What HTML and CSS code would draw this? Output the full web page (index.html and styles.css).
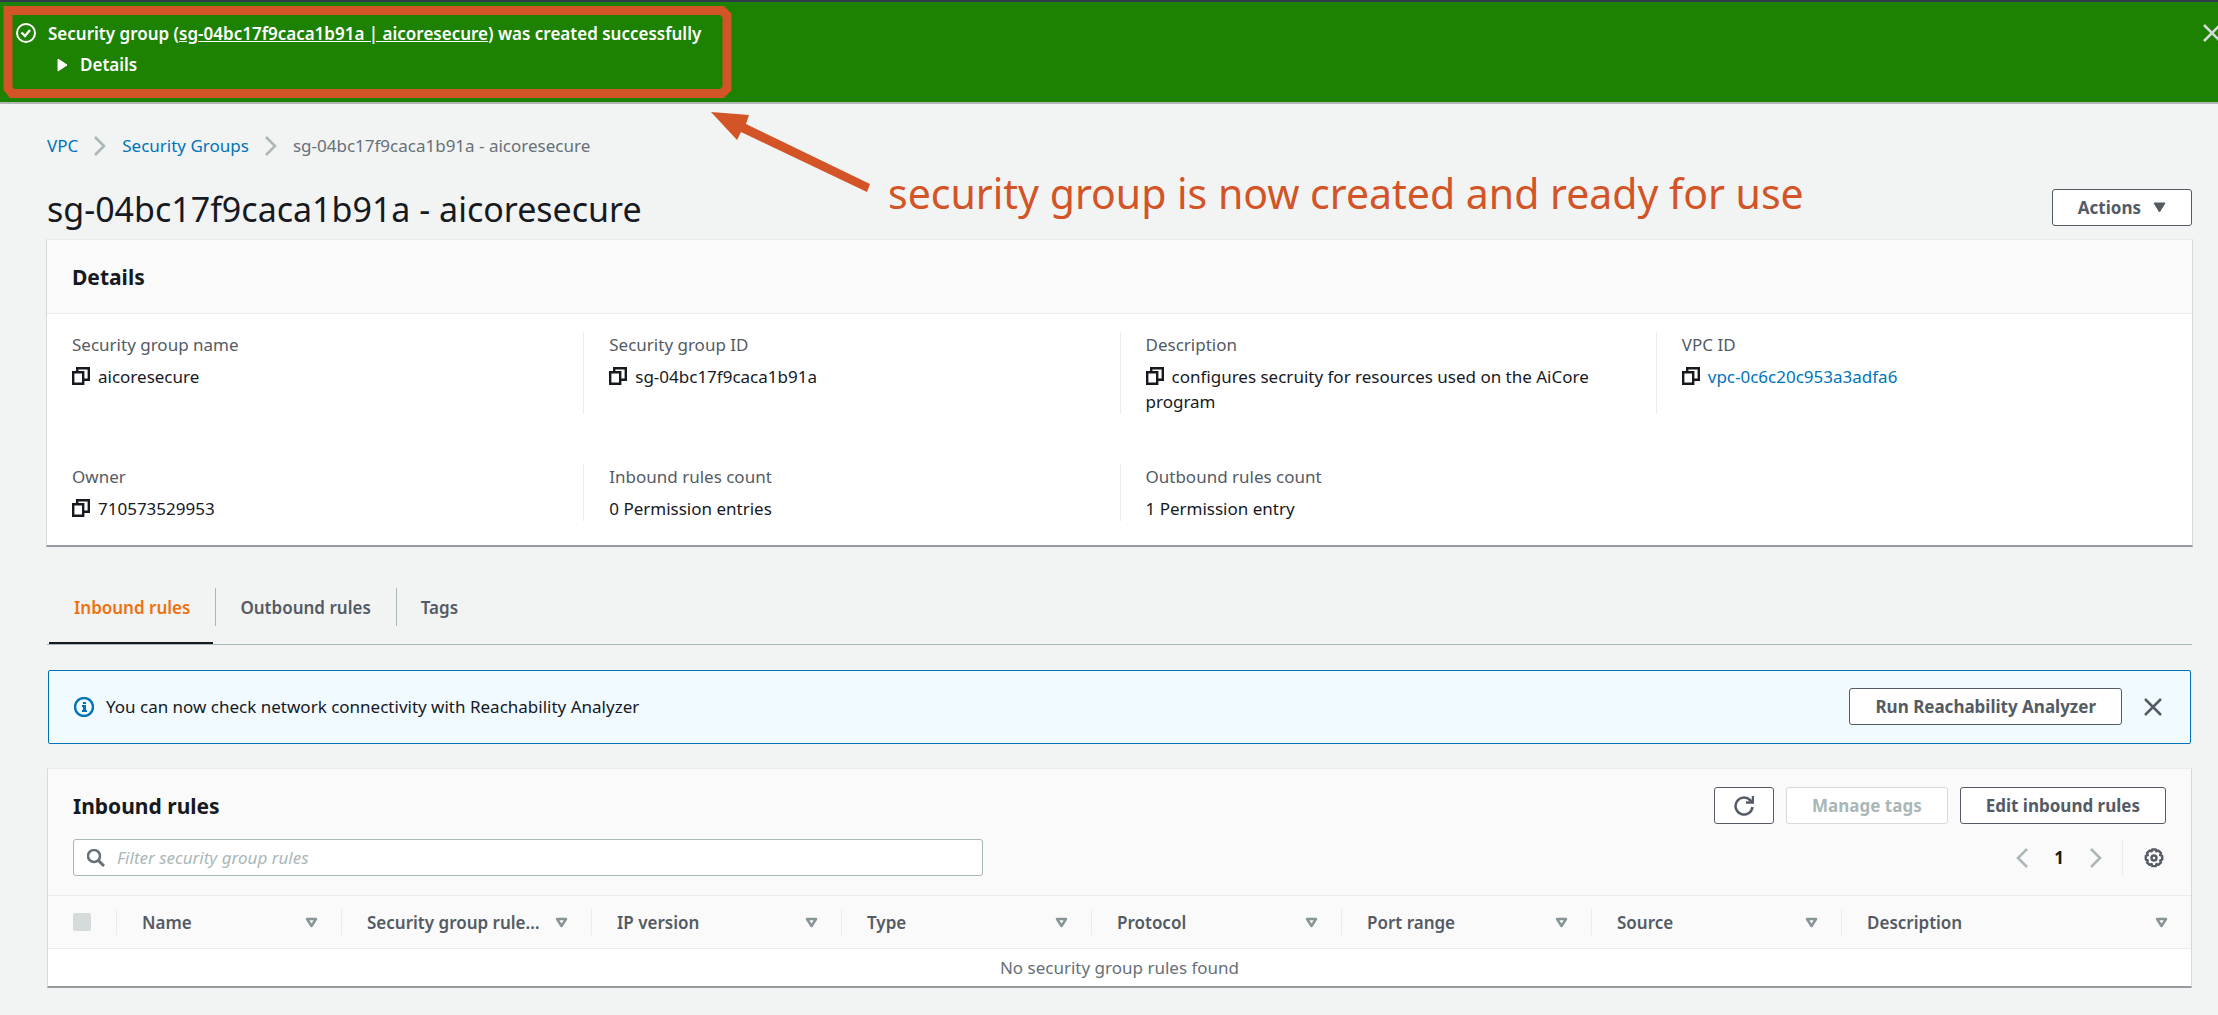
FILE: index.html
```html
<!DOCTYPE html>
<html lang="en">
<head>
<meta charset="utf-8">
<title>Security group details</title>
<link rel="stylesheet" href="styles.css">
</head>
<body>
<svg class="sprite" aria-hidden="true">
  <symbol id="copy" viewBox="0 0 18 18"><path d="M1.200 5.200h10v11.600h-10zM5.200 5V1.200h11.600v11.600H11" fill="none" stroke="currentColor" stroke-width="2.400"/></symbol>
  <symbol id="close" viewBox="0 0 18 18"><path d="M1 1l16 16M17 1L1 17" fill="none" stroke="currentColor" stroke-width="2.500"/></symbol>
  <symbol id="next" viewBox="0 0 12 20"><path d="M1 1l9 9-9 9" fill="none" stroke="currentColor" stroke-width="2.500"/></symbol>
  <symbol id="prev" viewBox="0 0 12 20"><path d="M11 1l-9 9 9 9" fill="none" stroke="currentColor" stroke-width="2.500"/></symbol>
  <symbol id="sort" viewBox="0 0 13 11"><path d="M2 2h9L6.500 9z" fill="none" stroke="currentColor" stroke-width="2.500" stroke-linejoin="round"/></symbol>
</svg>

<div class="flash" role="status">
  <svg class="icon20" viewBox="0 0 20 20"><circle cx="10" cy="10" r="9" fill="none" stroke="currentColor" stroke-width="2"/><path d="M5.500 9.500l3.500 3.500 5-6" fill="none" stroke="currentColor" stroke-width="2.400"/></svg>
  <div class="flash-body">
    <p>Security group (<a href="#group">sg-04bc17f9caca1b91a | aicoresecure</a>) was created successfully</p>
    <details>
      <summary><svg class="caret" viewBox="0 0 11 14"><path d="M1 1v12l9-6z" fill="currentColor" stroke="currentColor" stroke-linejoin="round"/></svg>Details</summary>
    </details>
  </div>
  <button class="plain flash-close" aria-label="Dismiss"><svg class="icon18"><use href="#close"/></svg></button>
</div>

<main id="group">
  <nav class="crumbs" aria-label="Breadcrumbs">
    <a href="#vpc">VPC</a>
    <svg class="chevron"><use href="#next"/></svg>
    <a href="#groups">Security Groups</a>
    <svg class="chevron"><use href="#next"/></svg>
    <span>sg-04bc17f9caca1b91a - aicoresecure</span>
  </nav>

  <header class="title-row">
    <h1>sg-04bc17f9caca1b91a - aicoresecure</h1>
    <button class="btn">Actions <svg class="down" viewBox="0 0 13 11"><path d="M1 1h11L6.500 10z" fill="currentColor" stroke="currentColor" stroke-linejoin="round"/></svg></button>
  </header>

  <section class="card summary">
    <h2 class="card-head">Details</h2>
    <dl class="facts">
      <div><dt>Security group name</dt><dd><svg class="icon18"><use href="#copy"/></svg>aicoresecure</dd></div>
      <div><dt>Security group ID</dt><dd><svg class="icon18"><use href="#copy"/></svg>sg-04bc17f9caca1b91a</dd></div>
      <div><dt>Description</dt><dd><svg class="icon18"><use href="#copy"/></svg>configures secruity for resources used on the AiCore program</dd></div>
      <div><dt>VPC ID</dt><dd><svg class="icon18"><use href="#copy"/></svg><a href="#vpc">vpc-0c6c20c953a3adfa6</a></dd></div>
      <div><dt>Owner</dt><dd><svg class="icon18"><use href="#copy"/></svg>710573529953</dd></div>
      <div><dt>Inbound rules count</dt><dd>0 Permission entries</dd></div>
      <div><dt>Outbound rules count</dt><dd>1 Permission entry</dd></div>
    </dl>
  </section>

  <div class="tabs" role="tablist">
    <button class="tab active" role="tab" aria-selected="true">Inbound rules</button>
    <button class="tab" role="tab">Outbound rules</button>
    <button class="tab" role="tab">Tags</button>
  </div>

  <div class="notice">
    <svg class="icon20" viewBox="0 0 20 20"><circle cx="10" cy="10" r="9" fill="none" stroke="currentColor" stroke-width="2.400"/><path d="M9 5h3v2H9zM8 8h4v5h1v2H8v-2h1v-3H8z" fill="currentColor"/></svg>
    <p>You can now check network connectivity with Reachability Analyzer</p>
    <button class="btn">Run Reachability Analyzer</button>
    <button class="plain" aria-label="Dismiss"><svg class="icon18"><use href="#close"/></svg></button>
  </div>

  <section class="card rules">
    <div class="rules-head">
      <h2>Inbound rules</h2>
      <div class="actions">
        <button class="btn refresh" aria-label="Refresh"><svg class="icon20" viewBox="0 0 20 20"><path d="M18.500 11A8.500 8.500 0 1 1 16 4l2 2" fill="none" stroke="currentColor" stroke-width="2.500"/><path d="M19 0v6.500h-7" fill="none" stroke="currentColor" stroke-width="2.500"/></svg></button>
        <button class="btn" disabled>Manage tags</button>
        <button class="btn">Edit inbound rules</button>
      </div>
    </div>
    <div class="filter-row">
      <label class="search">
        <svg class="icon18" viewBox="0 0 18 18"><circle cx="7" cy="7" r="6" fill="none" stroke="currentColor" stroke-width="2.500"/><path d="M11 11l6 6" stroke="currentColor" stroke-width="3"/></svg>
        <input type="text" placeholder="Filter security group rules" aria-label="Filter security group rules">
      </label>
      <div class="pager">
        <button class="plain" aria-label="Previous page"><svg class="chevron"><use href="#prev"/></svg></button>
        <button class="plain page">1</button>
        <button class="plain" aria-label="Next page"><svg class="chevron"><use href="#next"/></svg></button>
        <button class="plain gear" aria-label="Preferences"><svg class="icon20" viewBox="0 0 20 20"><path d="M8.200 1.500h3.600l.6 1.800 2-.8 2.600 2.600-.8 2 2 .7v3.800l-2 .7.8 2-2.600 2.600-2-.8-.6 2H8.200l-.6-2-2 .8L3 14.300l.8-2-2-.7V7.800l2-.7-.8-2 2.600-2.600 2 .8z" fill="none" stroke="currentColor" stroke-width="2.400" stroke-linejoin="round"/><circle cx="10" cy="10" r="2.500" fill="none" stroke="currentColor" stroke-width="2.400"/></svg></button>
      </div>
    </div>
    <table>
      <colgroup><col class="c-check"><col class="c-name"><col class="c"><col class="c"><col class="c"><col class="c"><col class="c"><col class="c"><col></colgroup>
      <thead>
        <tr>
          <th><div><input type="checkbox" disabled aria-label="Select all rules"></div></th>
          <th><div><span>Name</span><svg class="sort"><use href="#sort"/></svg></div></th>
          <th><div><span>Security group rule…</span><svg class="sort"><use href="#sort"/></svg></div></th>
          <th><div><span>IP version</span><svg class="sort"><use href="#sort"/></svg></div></th>
          <th><div><span>Type</span><svg class="sort"><use href="#sort"/></svg></div></th>
          <th><div><span>Protocol</span><svg class="sort"><use href="#sort"/></svg></div></th>
          <th><div><span>Port range</span><svg class="sort"><use href="#sort"/></svg></div></th>
          <th><div><span>Source</span><svg class="sort"><use href="#sort"/></svg></div></th>
          <th><div><span>Description</span><svg class="sort"><use href="#sort"/></svg></div></th>
        </tr>
      </thead>
      <tbody><tr><td colspan="9">No security group rules found</td></tr></tbody>
    </table>
  </section>
</main>

<svg class="markup" width="880" height="200" viewBox="0 0 880 200" aria-hidden="true">
  <path d="M8 10.500h714l5 5v73l-5 5H12l-4-5z" fill="none" stroke="#d35426" stroke-width="9"/>
  <path d="M711 112l38 3-3 9 124 60-3 8-126-60-4 8z" fill="#d35426"/>
</svg>
<p class="markup-text">security group is now created and ready for use</p>
</body>
</html>
```
FILE: styles.css
```css
:root {
  --ink: #16191f;
  --muted: #545b64;
  --link: #0073bb;
  --line: #eaeded;
  --grey: #aab7b8;
  --mark: #d35426;
}
* { box-sizing: border-box; }
body {
  margin: 0;
  position: relative;
  overflow-x: hidden;
  background: #f2f3f3;
  color: var(--ink);
  font: 17px/25px "Noto Sans", sans-serif;
}
p, h1, h2, dl, dd { margin: 0; }
a { color: var(--link); text-decoration: none; }
button, input { font: inherit; color: inherit; }
svg { flex: none; display: block; }
.sprite { position: absolute; width: 0; height: 0; }
.icon18 { width: 18px; height: 18px; }
.icon20 { width: 20px; height: 20px; }
.chevron { width: 12px; height: 20px; color: var(--grey); }

.plain { padding: 0; border: 0; background: none; color: var(--muted); }
.btn {
  display: flex;
  align-items: center;
  gap: 12px;
  height: 37px;
  padding: 0 25px;
  border: 1px solid var(--muted);
  border-radius: 3px;
  background: #fff;
  color: var(--muted);
  font-weight: 700;
  white-space: nowrap;
}
.btn:disabled { border-color: #d5dbdb; color: var(--grey); }
.down { width: 13px; height: 11px; }

.flash {
  display: flex;
  gap: 12px;
  height: 104px;
  padding: 19px 0 0 16px;
  border-top: 2px solid #2f3b4a;
  border-bottom: 2px solid #b1b6b8;
  background: #1d8102;
  color: #fff;
  font-weight: 600;
}
.flash > .icon20 { margin-top: 2px; }
.flash-body { flex: 1; }
.flash a { color: #fff; text-decoration: underline; }
.flash details { margin-top: 6px; padding-left: 9px; }
.flash summary { display: flex; align-items: center; gap: 12px; list-style: none; }
.caret { width: 11px; height: 14px; }
.flash-close { height: 18px; margin: 3px -3px 0 0; color: #d5dbdb; }

main { padding: 29px 26px 28px 47px; }
.crumbs { display: flex; align-items: center; gap: 16px; color: #687078; }
.title-row {
  display: flex;
  align-items: flex-start;
  justify-content: space-between;
  height: 41px;
  margin: 28px 0 12px;
}
h1 { font-size: 34px; line-height: 46px; font-weight: 400; }
.title-row .btn { margin-top: 3px; }

.card {
  border: 1px solid #d5dbdb;
  border-top-color: var(--line);
  border-bottom: 2px solid #959ca0;
  background: #fff;
}
.summary { margin: 0 -1px; }
h2 { font-size: 21px; line-height: 28px; font-weight: 700; }
.card-head { padding: 23px 25px 22px; background: #fafafa; border-bottom: 1px solid var(--line); }
.facts {
  display: grid;
  grid-template-columns: repeat(4, 1fr);
  row-gap: 50px;
  padding: 18px 0 24px;
}
.facts > div { padding: 0 60px 0 25px; border-left: 1px solid var(--line); }
.facts > div:nth-child(4n + 1) { border-left-color: transparent; padding-left: 24px; }
.facts dt { color: var(--muted); margin-bottom: 7px; }
.facts svg { display: inline-block; margin-right: 8px; vertical-align: -2px; }

.tabs { display: flex; margin-top: 41px; border-bottom: 1px solid var(--grey); padding-left: 2px; }
.tab {
  position: relative;
  height: 56px;
  padding: 0 25px 18px;
  border: 0;
  background: none;
  color: var(--muted);
  font-weight: 600;
}
.tab + .tab::before {
  content: "";
  position: absolute;
  left: 0;
  top: 0;
  height: 38px;
  border-left: 1px solid var(--grey);
}
.tab.active { color: #ec7211; }
.tab.active::after {
  content: "";
  position: absolute;
  left: 0;
  right: 2px;
  bottom: 0;
  height: 2px;
  background: var(--ink);
}

.notice {
  display: flex;
  align-items: center;
  margin: 25px 1px 24px;
  padding: 17px 28px 18px 25px;
  border: 1px solid var(--link);
  border-radius: 2px;
  background: #f1faff;
}
.notice > .icon20 { color: var(--link); margin-right: 12px; }
.notice p { flex: 1; }
.notice .plain { margin-left: 22px; }

.rules { background: #fafafa; }
.rules-head { display: flex; justify-content: space-between; align-items: center; padding: 18px 25px 0; }
.actions { display: flex; gap: 12px; }
.refresh { padding: 0 19px; }
.filter-row { display: flex; justify-content: space-between; padding: 15px 25px 19px; }
.search {
  display: flex;
  align-items: center;
  gap: 12px;
  flex: 0 1 910px;
  height: 37px;
  padding: 0 13px;
  border: 1px solid var(--grey);
  border-radius: 3px;
  background: #fff;
  color: #687078;
}
.search input { flex: 1; border: 0; padding: 0; background: none; outline: 0; }
.search input::placeholder { color: var(--grey); font-style: italic; opacity: 1; }
.pager { display: flex; align-items: center; }
.pager .page { width: 62px; color: var(--ink); font-weight: 700; }
.pager .gear { height: 37px; margin-left: 20px; padding: 0 2px 0 21px; border-left: 1px solid var(--line); }

table { width: 100%; border-collapse: collapse; table-layout: fixed; background: #fff; }
.c-check { width: 68px; }
.c-name { width: 225px; }
.c { width: 250px; }
thead { background: #fafafa; }
thead tr { border-top: 1px solid var(--line); border-bottom: 1px solid var(--line); }
th { padding: 13px 0; text-align: left; color: var(--muted); font-weight: 600; }
th div { display: flex; align-items: center; gap: 8px; height: 26px; padding: 0 23px 0 25px; }
th + th div { border-left: 1px solid var(--line); }
th span { flex: 1; white-space: nowrap; }
.sort { width: 13px; height: 11px; color: #879596; }
th input { appearance: none; width: 18px; height: 18px; margin: 0; border-radius: 2px; background: #d5dbdb; }
td { padding: 6px 0; text-align: center; color: #687078; }

.markup { position: absolute; left: 0; top: 0; pointer-events: none; }
.markup-text {
  position: absolute;
  left: 888px;
  top: 164px;
  color: var(--mark);
  font-size: 41px;
  line-height: 58px;
  white-space: nowrap;
}
```
